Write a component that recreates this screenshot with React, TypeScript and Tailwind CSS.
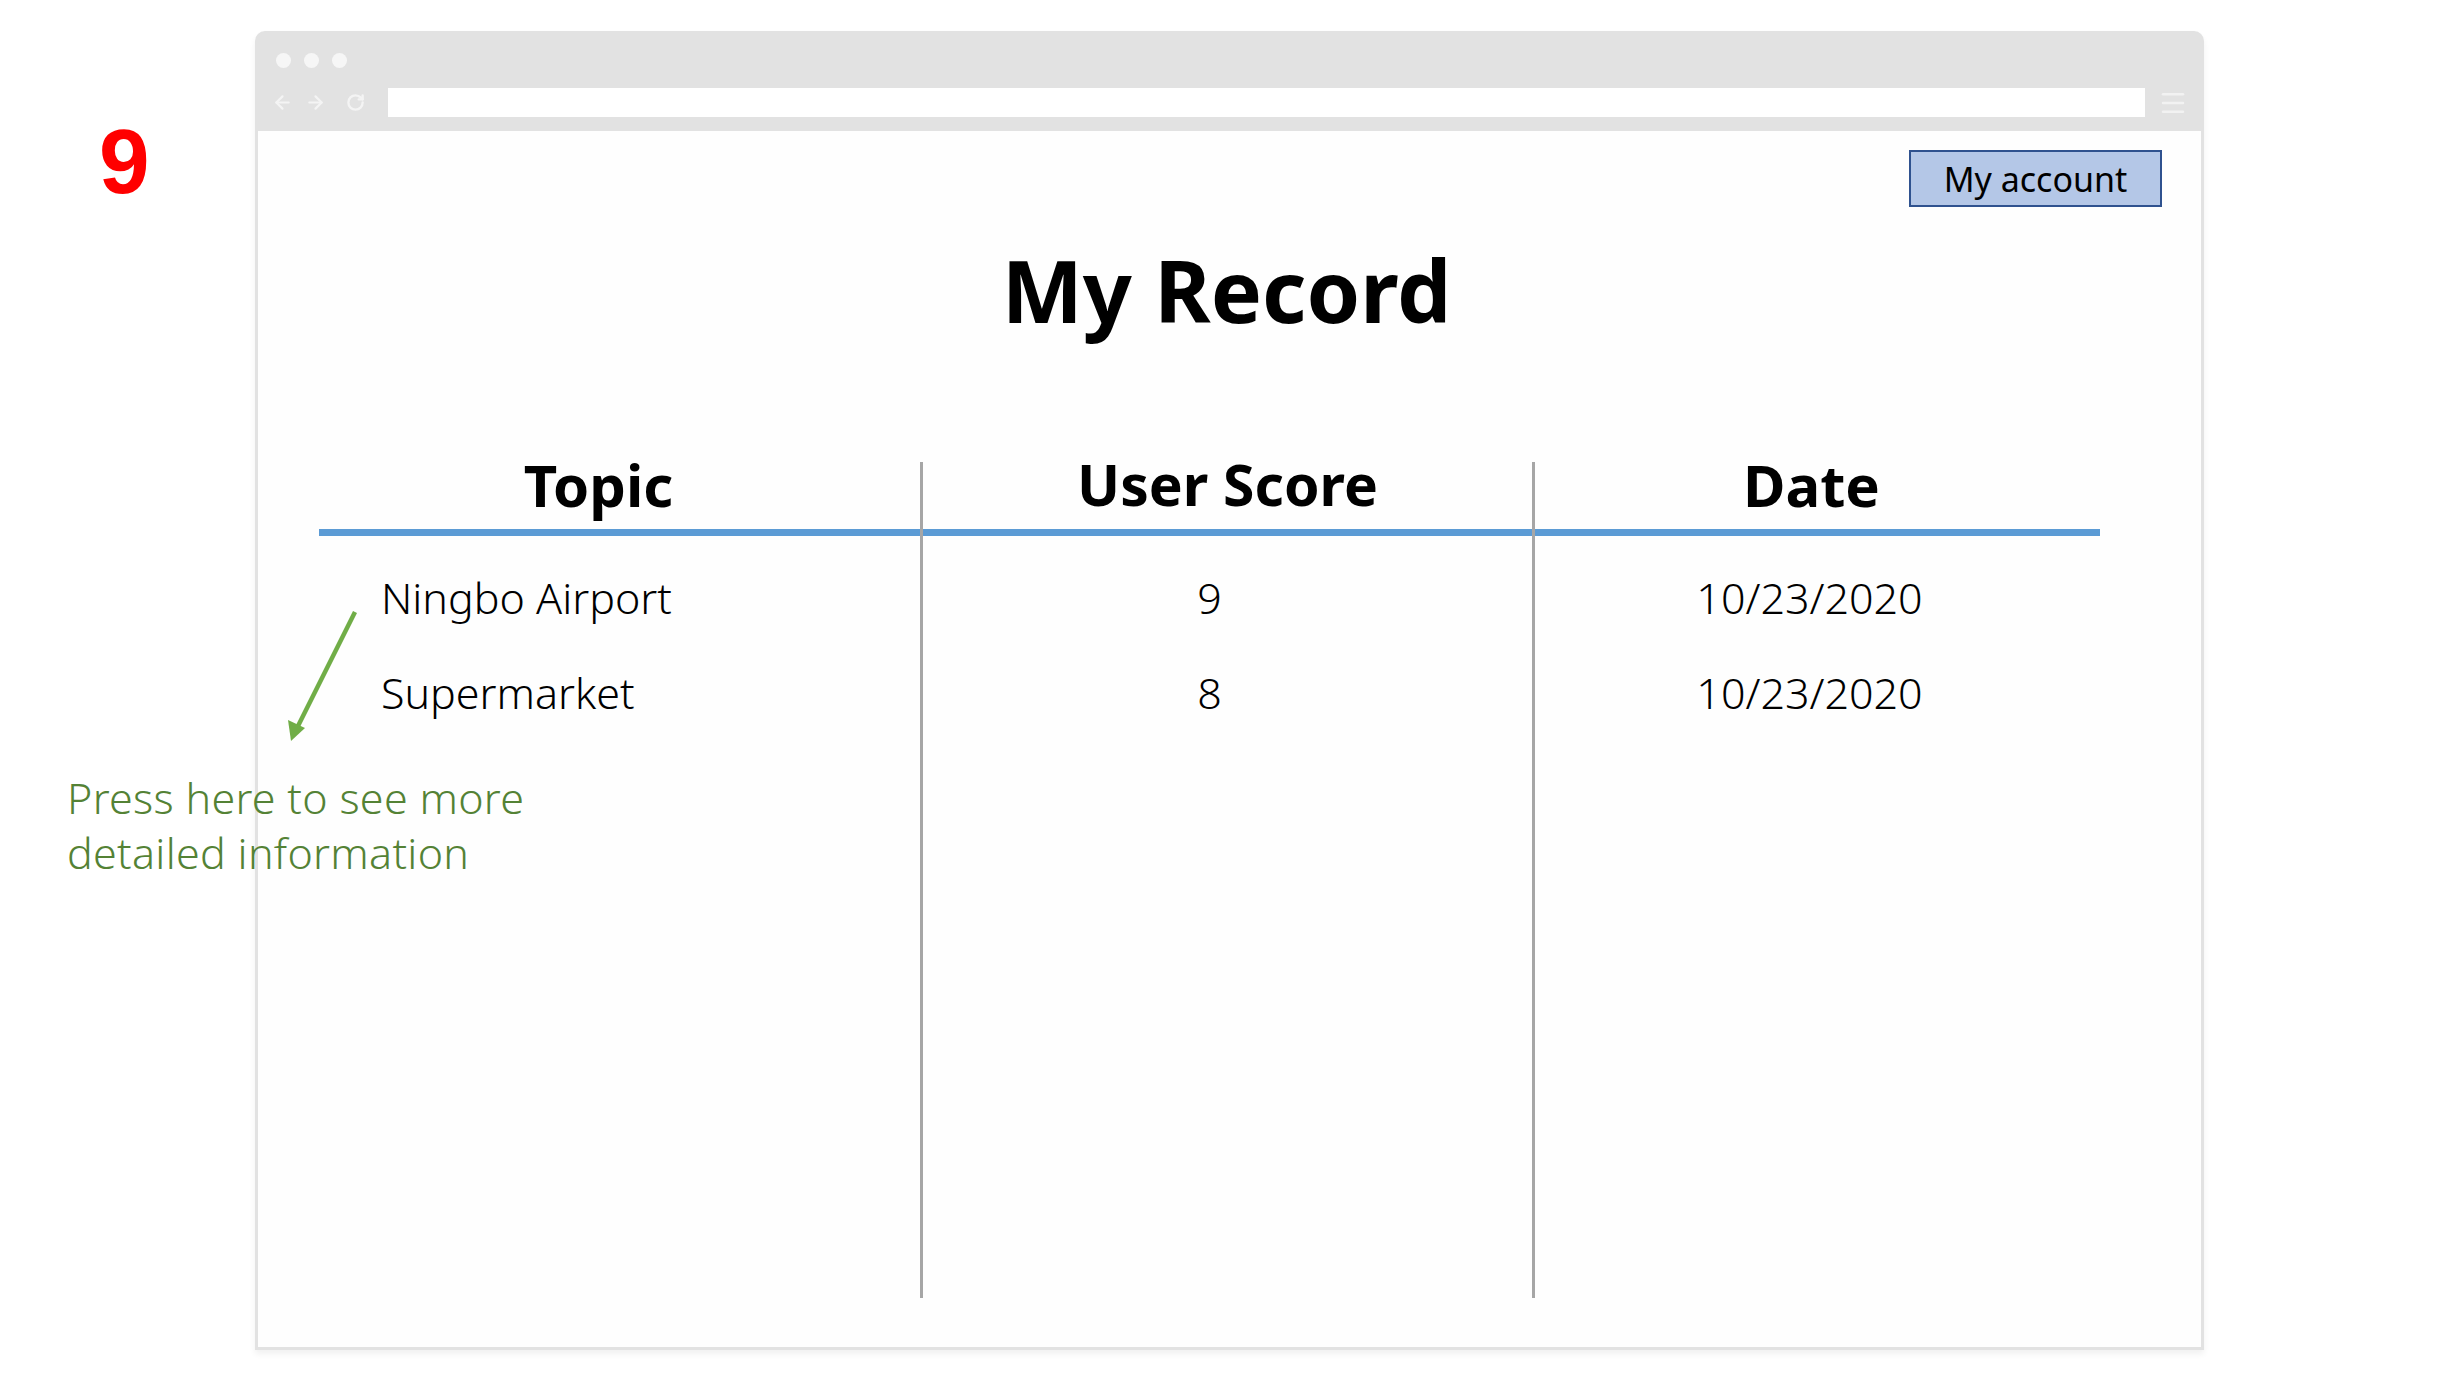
import { ArrowLeft, ArrowRight, RotateCw, Menu } from 'lucide-react'

const rows = [
  { topic: 'Ningbo Airport', score: '9', date: '10/23/2020' },
  { topic: 'Supermarket', score: '8', date: '10/23/2020' },
]

const sans = 'font-["Noto_Sans","Open_Sans",sans-serif]'

export default function App() {
  return (
    <div className={`relative w-[2455px] h-[1380px] bg-white overflow-hidden pl-[255px] pt-[31px] ${sans}`}>
      {/* slide number */}
      <div className='absolute left-[99px] top-[116px] font-["Liberation_Sans",Arial,sans-serif] font-bold text-[91px] leading-none text-[#ff0000]'>
        9
      </div>

      {/* browser window */}
      <div className="w-[1949px] h-[1319px] border-[3px] border-[#e2e2e2] rounded-t-[10px] flex flex-col bg-[#fefefe] shadow-[0_4px_6px_rgba(0,0,0,0.06)]">
        <div className="bg-[#e2e2e2] flex flex-col pt-[19px] pb-[14px]">
          <div className="flex gap-[13px] pl-[18px]">
            <span className="w-[15px] h-[15px] rounded-full bg-[#f6f6f6]" />
            <span className="w-[15px] h-[15px] rounded-full bg-[#f6f6f6]" />
            <span className="w-[15px] h-[15px] rounded-full bg-[#f6f6f6]" />
          </div>
          <div className="flex items-center mt-[20px] h-[29px]">
            <div className="flex items-center w-[130px] pl-[14px] gap-[12px] text-[#f4f4f4]">
              <ArrowLeft size={21} strokeWidth={2.5} />
              <ArrowRight size={21} strokeWidth={2.5} />
              <RotateCw size={19} strokeWidth={3} className="ml-[8px]" />
            </div>
            <div className="flex-1 h-full bg-white" />
            <div className="w-[56px] flex justify-center text-[#f2f2f2]">
              <Menu size={30} strokeWidth={2} />
            </div>
          </div>
        </div>

        <div className="flex-1 flex flex-col">
          <div className="flex justify-end pt-[19px] pr-[39px]">
            <button className="w-[253px] h-[57px] bg-[#b4c7e7] border-2 border-[#2f528f] text-[34px] leading-none text-black flex items-center justify-center">
              My account
            </button>
          </div>

          <h1 className="mt-[40px] pr-[6px] text-center text-[86px] font-bold leading-none text-black">My Record</h1>

          <div className="mt-[129px] ml-[61px] flex h-[836px]">
            {/* Topic */}
            <div className="w-[601px] flex flex-col">
              <div className="h-[74px] border-b-[7px] border-[#5b9bd5] flex justify-center pr-[42px]">
                <span className="mt-[-6px] text-[58px] font-bold leading-none">Topic</span>
              </div>
              <div className="flex flex-col gap-[52px] pt-[40px] pl-[62px]">
                {rows.map((r) => (
                  <span key={r.topic} className="text-[43px] font-light leading-none text-black">
                    {r.topic}
                  </span>
                ))}
              </div>
            </div>

            {/* User Score */}
            <div className="w-[612px] border-l-[3px] border-[#a6a6a6] flex flex-col">
              <div className="h-[74px] border-b-[7px] border-[#5b9bd5] flex justify-center">
                <span className="mt-[-6px] text-[57px] font-bold leading-none">User Score</span>
              </div>
              <div className="flex flex-col items-center gap-[52px] pt-[40px] pr-[36px]">
                {rows.map((r) => (
                  <span key={r.topic} className="text-[43px] font-light leading-none text-black">
                    {r.score}
                  </span>
                ))}
              </div>
            </div>

            {/* Date */}
            <div className="w-[568px] border-l-[3px] border-[#a6a6a6] flex flex-col">
              <div className="h-[74px] border-b-[7px] border-[#5b9bd5] flex justify-center pr-[12px]">
                <span className="mt-[-6px] text-[58px] font-bold leading-none">Date</span>
              </div>
              <div className="flex flex-col items-center gap-[52px] pt-[40px] pr-[16px]">
                {rows.map((r) => (
                  <span key={r.topic} className="text-[43px] font-light leading-none text-black">
                    {r.date}
                  </span>
                ))}
              </div>
            </div>
          </div>
        </div>
      </div>

      {/* annotation */}
      <svg className="absolute left-[280px] top-[600px]" width="90" height="150" viewBox="0 0 90 150">
        <line x1="75" y1="12" x2="17" y2="128" stroke="#70ad47" strokeWidth="4.5" />
        <polygon points="11,141 8,120 25,128" fill="#70ad47" />
      </svg>
      <div className="absolute left-[67px] top-[770px] text-[43px] tracking-[0.3px] font-light leading-[55px] text-[#548235]">
        Press here to see more
        <br />
        detailed information
      </div>
    </div>
  )
}
